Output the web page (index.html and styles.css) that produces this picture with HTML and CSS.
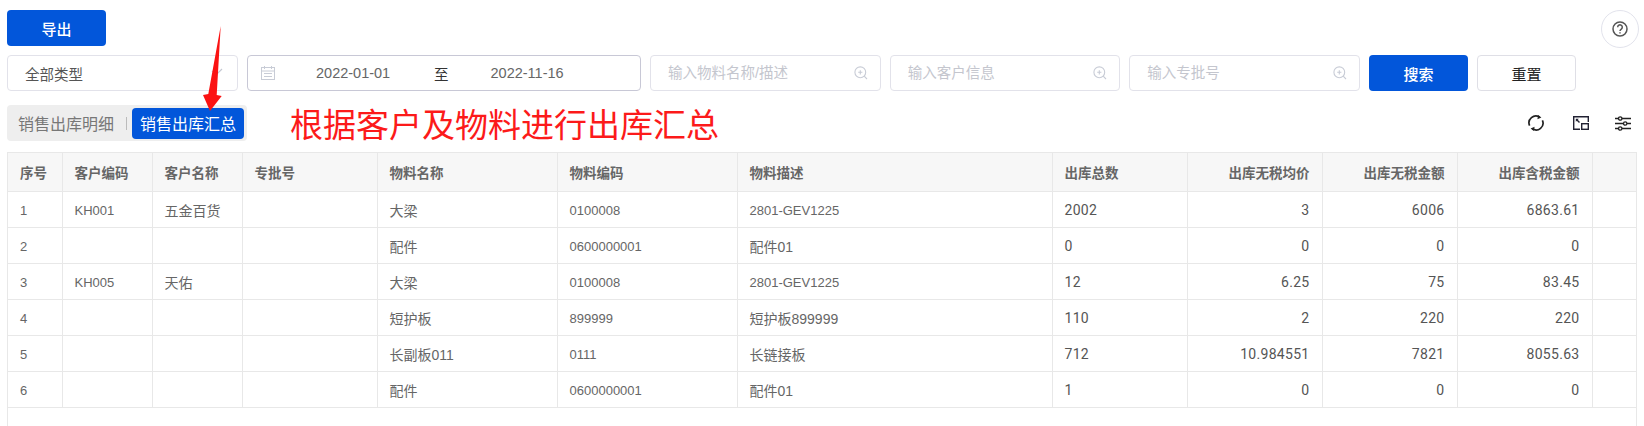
FILE: index.html
```html
<!DOCTYPE html>
<html lang="zh-CN">
<head>
<meta charset="utf-8">
<title>销售出库汇总</title>
<link rel="stylesheet" href="styles.css">
</head>
<body>
<div class="page">
  <div class="top-row">
    <button class="btn btn-primary btn-export">导出</button>
    <button class="help" aria-label="帮助">
      <svg width="18" height="18" viewBox="0 0 18 18" fill="none" stroke="#555" stroke-width="1.5"><circle cx="9" cy="9" r="7"/><path d="M6.7 7.2a2.3 2.3 0 1 1 3.6 1.9c-.9.6-1.3 1-1.3 2"/><path d="M9 12.2v1.4"/></svg>
    </button>
  </div>

  <div class="filters">
    <div class="field select">
      <span>全部类型</span>
      <svg class="chev" width="14" height="10" viewBox="0 0 14 10" fill="none" stroke="#c4c8d2" stroke-width="1.2"><path d="M1 3l4 4 6-6"/></svg>
    </div>
    <div class="field date">
      <svg class="cal" width="14" height="14" viewBox="0 0 14 14" fill="none" stroke="#c8ccd6" stroke-width="1"><rect x=".5" y="1.5" width="13" height="12"/><path d="M.5 5h13M3.5 0v3M10.5 0v3M3 7.5h8M3 10.5h8"/></svg>
      <span class="d1">2022-01-01</span>
      <span class="to">至</span>
      <span class="d2">2022-11-16</span>
    </div>
    <label class="field search"><input placeholder="输入物料名称/描述"><svg width="14" height="14" viewBox="0 0 14 14" fill="none" stroke="#c8ccd6" stroke-width="1.1"><circle cx="6.3" cy="6.3" r="5.4"/><path d="M10.2 10.2L13 13M6.3 4.2v4.2M4.2 6.3h4.2"/></svg></label>
    <label class="field search"><input placeholder="输入客户信息"><svg width="14" height="14" viewBox="0 0 14 14" fill="none" stroke="#c8ccd6" stroke-width="1.1"><circle cx="6.3" cy="6.3" r="5.4"/><path d="M10.2 10.2L13 13M6.3 4.2v4.2M4.2 6.3h4.2"/></svg></label>
    <label class="field search"><input placeholder="输入专批号"><svg width="14" height="14" viewBox="0 0 14 14" fill="none" stroke="#c8ccd6" stroke-width="1.1"><circle cx="6.3" cy="6.3" r="5.4"/><path d="M10.2 10.2L13 13M6.3 4.2v4.2M4.2 6.3h4.2"/></svg></label>
    <button class="btn btn-primary">搜索</button>
    <button class="btn btn-plain">重置</button>
  </div>

  <div class="tab-row">
    <div class="tabs">
      <span class="tab">销售出库明细</span>
      <i class="sep"></i>
      <span class="tab active">销售出库汇总</span>
    </div>
    <div class="note">根据客户及物料进行出库汇总</div>
    <div class="tools">
      <svg width="16" height="16" viewBox="0 0 16 16" fill="none" stroke="#222" stroke-width="1.7"><path d="M1.6 10.6A6.8 6.8 0 0 1 11.6 2.2"/><path d="M14.4 5.4A6.8 6.8 0 0 1 4.4 13.8"/><path d="M10.2 0l3.2 2.6-4 1.6zM5.8 16l-3.2-2.6 4-1.6z" fill="#222" stroke="none"/></svg>
      <svg width="16" height="14" viewBox="0 0 16 14" fill="none" stroke="#223" stroke-width="1.4"><path d="M7 13.3H.7V.7h14.6V6"/><rect x="8.7" y="7.7" width="6.6" height="5.6"/><path d="M3.5 3.5l3 3" /><path d="M2.8 2.8h3l-3 3z" fill="#223" stroke="none"/></svg>
      <svg class="sliders" width="16" height="15" viewBox="0 0 16 15" fill="none" stroke="#222" stroke-width="1.3"><path d="M0 2.5h3.5M7 2.5h9M0 7.5h8.5M12 7.5h4M0 12.5h3.5M7 12.5h9"/><circle cx="5.2" cy="2.5" r="1.7"/><circle cx="10.2" cy="7.5" r="1.7"/><circle cx="5.2" cy="12.5" r="1.7"/></svg>
    </div>
  </div>

  <div class="table-wrap">
    <table>
      <colgroup>
        <col class="c54"><col class="c90"><col class="c90"><col class="c135"><col class="c180"><col class="c180"><col class="c315"><col class="c135"><col class="c135"><col class="c135"><col class="c135"><col>
      </colgroup>
      <thead>
        <tr>
          <th>序号</th><th>客户编码</th><th>客户名称</th><th>专批号</th><th>物料名称</th><th>物料编码</th><th>物料描述</th><th>出库总数</th><th class="r">出库无税均价</th><th class="r">出库无税金额</th><th class="r">出库含税金额</th><th></th>
        </tr>
      </thead>
      <tbody>
        <tr><td>1</td><td>KH001</td><td class="cn">五金百货</td><td></td><td class="cn">大梁</td><td>0100008</td><td>2801-GEV1225</td><td class="n">2002</td><td class="n r">3</td><td class="n r">6006</td><td class="n r">6863.61</td><td></td></tr>
        <tr><td>2</td><td></td><td></td><td></td><td class="cn">配件</td><td>0600000001</td><td class="cn">配件01</td><td class="n">0</td><td class="n r">0</td><td class="n r">0</td><td class="n r">0</td><td></td></tr>
        <tr><td>3</td><td>KH005</td><td class="cn">天佑</td><td></td><td class="cn">大梁</td><td>0100008</td><td>2801-GEV1225</td><td class="n">12</td><td class="n r">6.25</td><td class="n r">75</td><td class="n r">83.45</td><td></td></tr>
        <tr><td>4</td><td></td><td></td><td></td><td class="cn">短护板</td><td>899999</td><td class="cn">短护板899999</td><td class="n">110</td><td class="n r">2</td><td class="n r">220</td><td class="n r">220</td><td></td></tr>
        <tr><td>5</td><td></td><td></td><td></td><td class="cn">长副板011</td><td>0111</td><td class="cn">长链接板</td><td class="n">712</td><td class="n r">10.984551</td><td class="n r">7821</td><td class="n r">8055.63</td><td></td></tr>
        <tr><td>6</td><td></td><td></td><td></td><td class="cn">配件</td><td>0600000001</td><td class="cn">配件01</td><td class="n">1</td><td class="n r">0</td><td class="n r">0</td><td class="n r">0</td><td></td></tr>
      </tbody>
    </table>
  </div>

  <svg class="arrow" width="30" height="90" viewBox="200 24 30 90"><polygon points="220.7,26 216.7,95 221.7,96 210,111 203,95 208.3,94" fill="#fb1212"/></svg>
</div>
</body>
</html>
```
FILE: styles.css
```css
* { box-sizing: border-box; }
html, body { margin: 0; height: 100%; overflow: hidden; background: #fff; }
body { font-family: "Liberation Sans", "Noto Sans CJK SC", sans-serif; color: #666; font-size: 14px; }

.page { position: relative; display: flex; flex-direction: column; height: 426px; padding: 10px 5px 0 7px; }

.top-row { display: flex; justify-content: space-between; align-items: flex-start; height: 38px; }

.btn { height: 36px; width: 99px; border-radius: 4px; font-family: "Noto Sans CJK SC", sans-serif; font-size: 15px; font-weight: 500; padding: 0; }
.btn-primary { background: #0256da; border: 0; color: #fff; }
.btn-plain { background: #fff; border: 1px solid #dfdfe6; color: #222; font-weight: 400; }
.help { width: 38px; height: 38px; border-radius: 50%; border: 1px solid #e2e3ec; background: #fff; display: flex; align-items: center; justify-content: center; padding: 0; }

.filters { display: grid; grid-template-columns: 231px 394px repeat(3, minmax(0, 1fr)) 99px 99px; column-gap: 9px; width: 1569px; margin-top: 7px; height: 36px; }
.field { height: 36px; min-width: 0; display: flex; align-items: center; background: #fff; border: 1px solid #e2e2ea; border-radius: 4px; }
.select { padding-left: 17px; font-family: "Noto Sans CJK SC", sans-serif; font-size: 14.5px; color: #555; justify-content: space-between; padding-right: 12px; }
.date { border-color: #c8c8d6; padding-left: 13px; font-size: 14.5px; color: #666; white-space: nowrap; }
.cal { margin-right: 41px; flex: none; }
.d1 { width: 74px; }
.to { margin-left: 44px; color: #333; font-family: "Noto Sans CJK SC", sans-serif; }
.d2 { margin-left: 42px; }
.search { padding: 0 12px 0 17px; }
.search input { flex: 1; min-width: 0; border: 0; outline: 0; padding: 0; background: none; font-family: "Liberation Sans", "Noto Sans CJK SC", sans-serif; font-size: 14.5px; }
.search input::placeholder { color: #c4c6ce; opacity: 1; }
.search svg { flex: none; }

.tab-row { display: flex; align-items: center; margin-top: 14px; height: 36px; padding-right: 2px; }
.tabs { display: flex; align-items: center; width: 240px; height: 36px; padding-left: 11px; background: #eee; border-radius: 4px; font-family: "Noto Sans CJK SC", sans-serif; font-size: 16px; }
.tab { white-space: nowrap; color: #777; }
.sep { width: 1px; height: 13px; background: #bbb; margin: 0 5px 0 12px; }
.tab.active { background: #0256da; color: #fff; height: 31px; line-height: 31px; width: 112px; text-align: center; border-radius: 4px; }
.note { margin-left: 43px; font-family: "Noto Sans CJK SC", sans-serif; font-size: 33px; line-height: 40px; color: #fc1a1a; white-space: nowrap; }
.tools { margin-left: auto; display: flex; align-items: center; gap: 29px; padding-right: 6px; }
.sliders { margin-left: -3px; }

.table-wrap { margin-top: 11px; width: 1630px; flex: 1; border-left: 1px solid #e8e8e8; border-right: 1px solid #e8e8e8; }
table { width: 100%; table-layout: fixed; border-collapse: collapse; }
.c54 { width: 54px; } .c90 { width: 90px; } .c135 { width: 135px; } .c180 { width: 180px; } .c315 { width: 315px; }
th, td { border: 1px solid #e8e8e8; padding: 0 12px; text-align: left; white-space: nowrap; overflow: hidden; }
tr > :first-child { border-left: 0; }
tr > :last-child { border-right: 0; }
th { height: 39px; background: #f7f7f7; color: #666; font-family: "Noto Sans CJK SC", sans-serif; font-size: 13.5px; font-weight: 700; }
td { height: 36px; padding-top: 2px; font-size: 13px; color: #666; }
td.cn { padding-top: 0; font-size: 14px; font-family: "Liberation Sans", "Noto Sans CJK SC", sans-serif; }
td.n { padding-top: 0; font-family: Roboto, sans-serif; font-size: 14px; color: #555; letter-spacing: .3px; }
.r { text-align: right; }

.arrow { position: absolute; left: 200px; top: 24px; pointer-events: none; }
```
